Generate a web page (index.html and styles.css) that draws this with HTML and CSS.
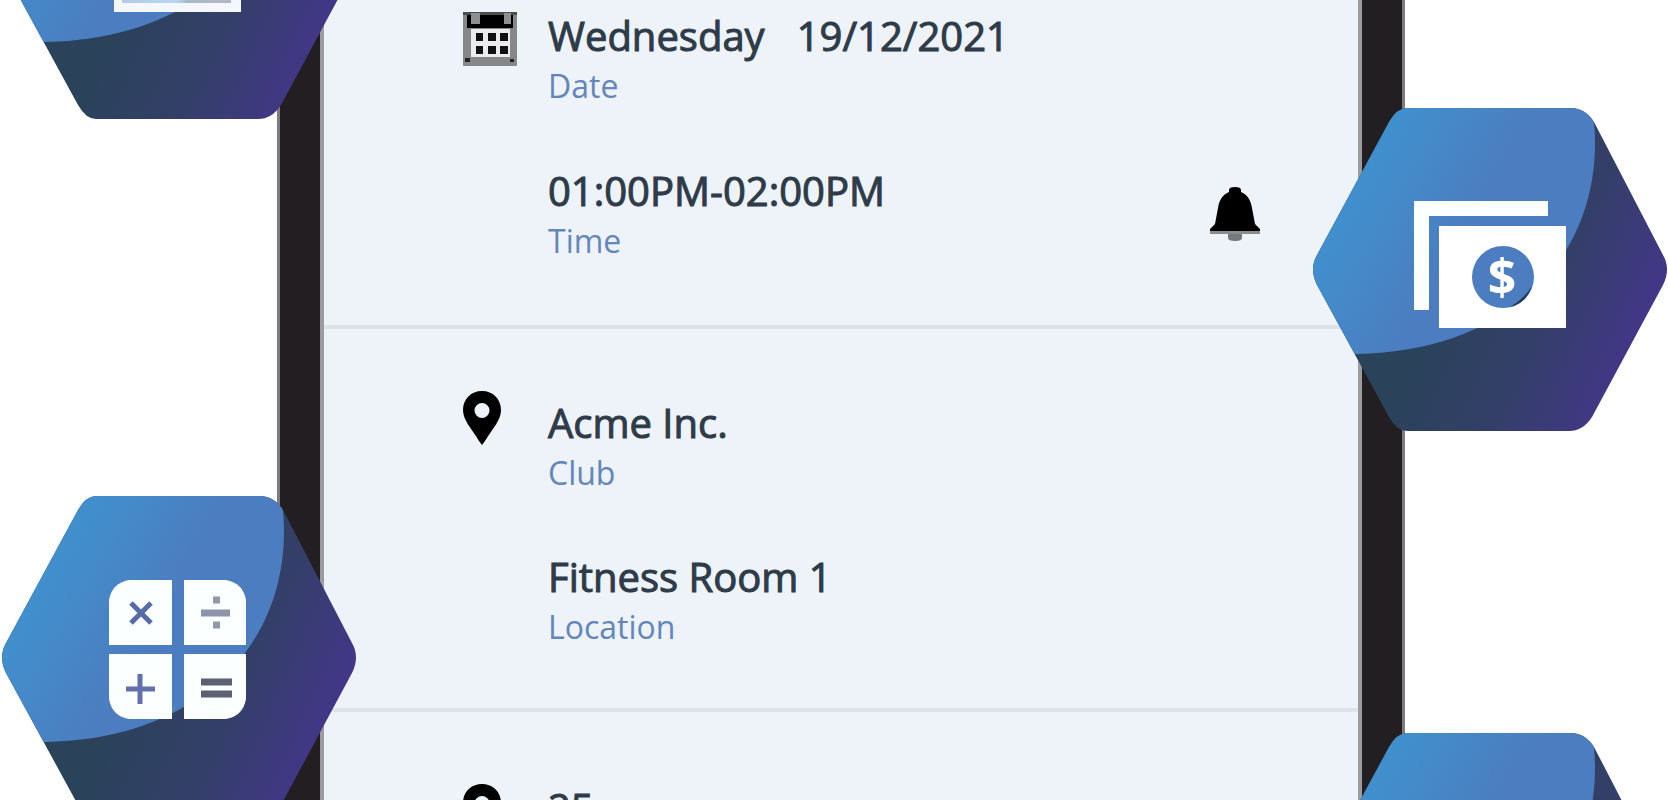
FILE: index.html
```html
<!DOCTYPE html>
<html lang="en">
<head>
<meta charset="utf-8">
<meta name="viewport" content="width=device-width, initial-scale=1">
<title>Booking details</title>
<link rel="stylesheet" href="styles.css">
</head>
<body>
<div class="stage">
  <main class="phone">
    <div class="screen">
      <section class="detail detail--first">
        <svg class="icon icon--calendar" viewBox="0 0 54 54" aria-hidden="true">
          <rect width="54" height="54" rx="1" fill="#858789"/>
          <path d="M4 2h46v14H4z" fill="#000"/>
          <path d="M0 0h54v3H0z" fill="#4a4c4e"/>
          <path d="M8 17h39v28H8z" fill="#ececee"/>
          <path d="M8 1h9v11H8zM41 1h7v11h-7z" fill="#8d8f91"/>
          <path d="M13 21h7v8h-7zM25 21h8v8h-8zM37 21h8v8h-8zM13 34h7v8h-7zM25 34h8v8h-8zM37 34h8v8h-8z" fill="#111"/>
          <path d="M2 46h5v4H2zM47 47h4v3h-4z" fill="#222"/>
        </svg>
        <div class="entries">
          <div class="entry">
            <p class="value"><span>Wednesday</span><span>19/12/2021</span></p>
            <p class="label">Date</p>
          </div>
          <div class="entry-row">
            <div class="entry">
              <p class="value">01:00PM-02:00PM</p>
              <p class="label">Time</p>
            </div>
            <button class="bell" type="button" aria-label="Reminder">
              <svg class="bell-icon" viewBox="0 0 50 54" aria-hidden="true">
                <path d="M18 47h14v4q0 3-7 3t-7-3z" fill="#77797c"/>
                <path d="M19 3q0-3 6-3t6 3v2c7 3 10 9 11 16l3 16 5 5v3H0v-3l5-5 3-16C9 14 12 8 19 5z" fill="#000"/>
                <path d="M0 44h50v3H0z" fill="#8a8c8e"/>
              </svg>
            </button>
          </div>
        </div>
      </section>

      <section class="detail">
        <svg class="icon icon--pin" viewBox="0 0 38 54" aria-hidden="true">
          <path fill-rule="evenodd" d="M19 0C8 0 0 8 0 19c0 10 8 18 16 31l3 4 3-4c8-13 16-21 16-31C38 8 30 0 19 0zm0 12a7 7 0 1 1 0 15 7 7 0 0 1 0-15z"/>
        </svg>
        <div class="entries">
          <div class="entry">
            <p class="value">Acme Inc.</p>
            <p class="label">Club</p>
          </div>
          <div class="entry">
            <p class="value">Fitness Room 1</p>
            <p class="label">Location</p>
          </div>
        </div>
      </section>

      <section class="detail detail--last">
        <svg class="icon icon--pin" viewBox="0 0 38 54" aria-hidden="true">
          <path fill-rule="evenodd" d="M19 0C8 0 0 8 0 19c0 10 8 18 16 31l3 4 3-4c8-13 16-21 16-31C38 8 30 0 19 0zm0 12a7 7 0 1 1 0 15 7 7 0 0 1 0-15z"/>
        </svg>
        <div class="entries">
          <div class="entry">
            <p class="value">25</p>
          </div>
        </div>
      </section>
    </div>
  </main>

  <svg class="badge badge--top-left" viewBox="0 0 357 324" aria-hidden="true">
    <defs>
      <linearGradient id="light" gradientUnits="userSpaceOnUse" x1="30" y1="70" x2="150" y2="140">
        <stop offset="0" stop-color="#3f92cf"/>
        <stop offset="1" stop-color="#4c7dc0"/>
      </linearGradient>
      <linearGradient id="dark" gradientUnits="userSpaceOnUse" x1="130" y1="200" x2="310" y2="280">
        <stop offset="0" stop-color="#2b425b"/>
        <stop offset="0.5" stop-color="#343f69"/>
        <stop offset="1" stop-color="#433689"/>
      </linearGradient>
      <linearGradient id="frame" x1="0" x2="1" y1="0" y2="0">
        <stop offset="0" stop-color="#b3cbe6"/>
        <stop offset="0.5" stop-color="#b9d7ef"/>
        <stop offset="0.6" stop-color="#a9b8c7"/>
        <stop offset="1" stop-color="#b4b7c9"/>
      </linearGradient>
      <clipPath id="hex-clip">
        <path d="M96 1H260Q274 1 283 15L352 148Q360 162 352 178L281 310Q272 324 258 324H96Q86 324 78 310L6 178Q-2 162 6 148L78 15Q86 1 96 1Z"/>
      </clipPath>
      <g id="hex" clip-path="url(#hex-clip)">
        <path d="M0 0H357V324H0Z" fill="url(#dark)"/>
        <path d="M0 0H280Q284 14 284 36C284 150 200 244 46 247H0Z" fill="url(#light)"/>
      </g>
    </defs>
    <use href="#hex"/>
    <path d="M114 90H241V217H114Z" fill="#f4f8fe"/>
    <path d="M122 98H231V208H122Z" fill="url(#frame)"/>
  </svg>

  <svg class="badge badge--calculator" viewBox="0 0 357 324" aria-hidden="true">
    <use href="#hex"/>
    <g fill="#fcffff">
      <path d="M129 85H172V150H109V105Q112 88 129 85Z"/>
      <path d="M184 85H226Q243 88 246 105V150H184Z"/>
      <path d="M109 159H172V224H129Q112 221 109 204Z"/>
      <path d="M184 159H246V204Q243 221 226 224H184Z"/>
    </g>
    <g fill="none" stroke-width="5">
      <path d="M131 108l20 20M151 108l-20 20" stroke="#566ba5"/>
      <path d="M201 118h29" stroke="#8c94ab" stroke-width="7"/>
      <path d="M213 105h7M213 130h7" stroke="#9097a5" stroke-width="7"/>
      <path d="M126 194h29M140 179v30" stroke="#6271ad"/>
      <path d="M201 187h31M201 199h31" stroke="#5d6070" stroke-width="7"/>
    </g>
  </svg>

  <svg class="badge badge--money" viewBox="0 0 357 324" aria-hidden="true">
    <use href="#hex"/>
    <path d="M103 94H237V109H118V203H103Z" fill="#fcffff"/>
    <path fill-rule="evenodd" d="M128 119H255V221H128ZM192 139a31 31 0 1 0 0 62 31 31 0 0 0 0-62Z" fill="#fff"/>
    <path d="M221 179A31 31 0 0 1 199 200Q213 192 221 179Z" fill="#22395a"/>
    <text class="dollar" x="191" y="188" text-anchor="middle">$</text>
  </svg>

  <svg class="badge badge--bottom-right" viewBox="0 0 357 324" aria-hidden="true">
    <use href="#hex"/>
  </svg>
</div>
</body>
</html>
```
FILE: styles.css
```css
* {
  box-sizing: border-box;
}

body {
  margin: 0;
  background: #fff;
  color: #2e3b48;
  font-family: "Open Sans", "Noto Sans", sans-serif;
}

.stage {
  position: relative;
  display: grid;
  grid-template-columns: 277fr 1128fr 263fr;
  height: 100vh;
  overflow: hidden;
}

.phone {
  grid-column: 2;
  padding: 0 40px;
  border: solid #7d7b7e;
  border-width: 0 3px;
  background: #231e21;
}

.screen {
  min-height: 100%;
  border: solid #9a9c9f;
  border-width: 0 4px;
  background: #edf3f9;
}

.detail {
  display: grid;
  grid-template-columns: 54px 1fr;
  column-gap: 31px;
  align-items: start;
  padding: 62px 98px 61px 139px;
  border-bottom: 4px solid #dee3e8;
}

.detail--first {
  padding-top: 12px;
  padding-bottom: 64px;
}

.detail--last {
  padding-top: 72px;
  border-bottom: 0;
}

.entries {
  display: grid;
  gap: 60px;
  padding-top: 8px;
}

.detail--first .entries,
.detail--last .entries {
  padding-top: 0;
}

.detail--first .entries {
  gap: 61px;
}

.entry {
  display: grid;
  gap: 6px;
}

.entry-row {
  display: flex;
  align-items: center;
  justify-content: space-between;
}

.value,
.label {
  margin: 0;
}

.value {
  display: flex;
  gap: 32px;
  font-size: 40px;
  line-height: 48px;
  -webkit-text-stroke: 1px currentColor;
}

.label {
  color: #6486bb;
  font-size: 32px;
  line-height: 40px;
}

.icon {
  display: block;
  height: 54px;
}

.icon--calendar {
  width: 54px;
}

.icon--pin {
  width: 38px;
}

.bell {
  padding: 0;
  border: 0;
  background: none;
  cursor: pointer;
}

.bell-icon {
  display: block;
  width: 50px;
  height: 54px;
}

.badge {
  position: absolute;
  width: 357px;
  height: 324px;
}

.badge--top-left {
  top: -205px;
  left: 0;
}

.badge--calculator {
  top: 495px;
  left: 0;
}

.badge--money {
  top: 107px;
  right: 0;
}

.badge--bottom-right {
  top: 732px;
  right: 0;
}

.dollar {
  fill: #fff;
  font-size: 50px;
  font-weight: 700;
}
```
